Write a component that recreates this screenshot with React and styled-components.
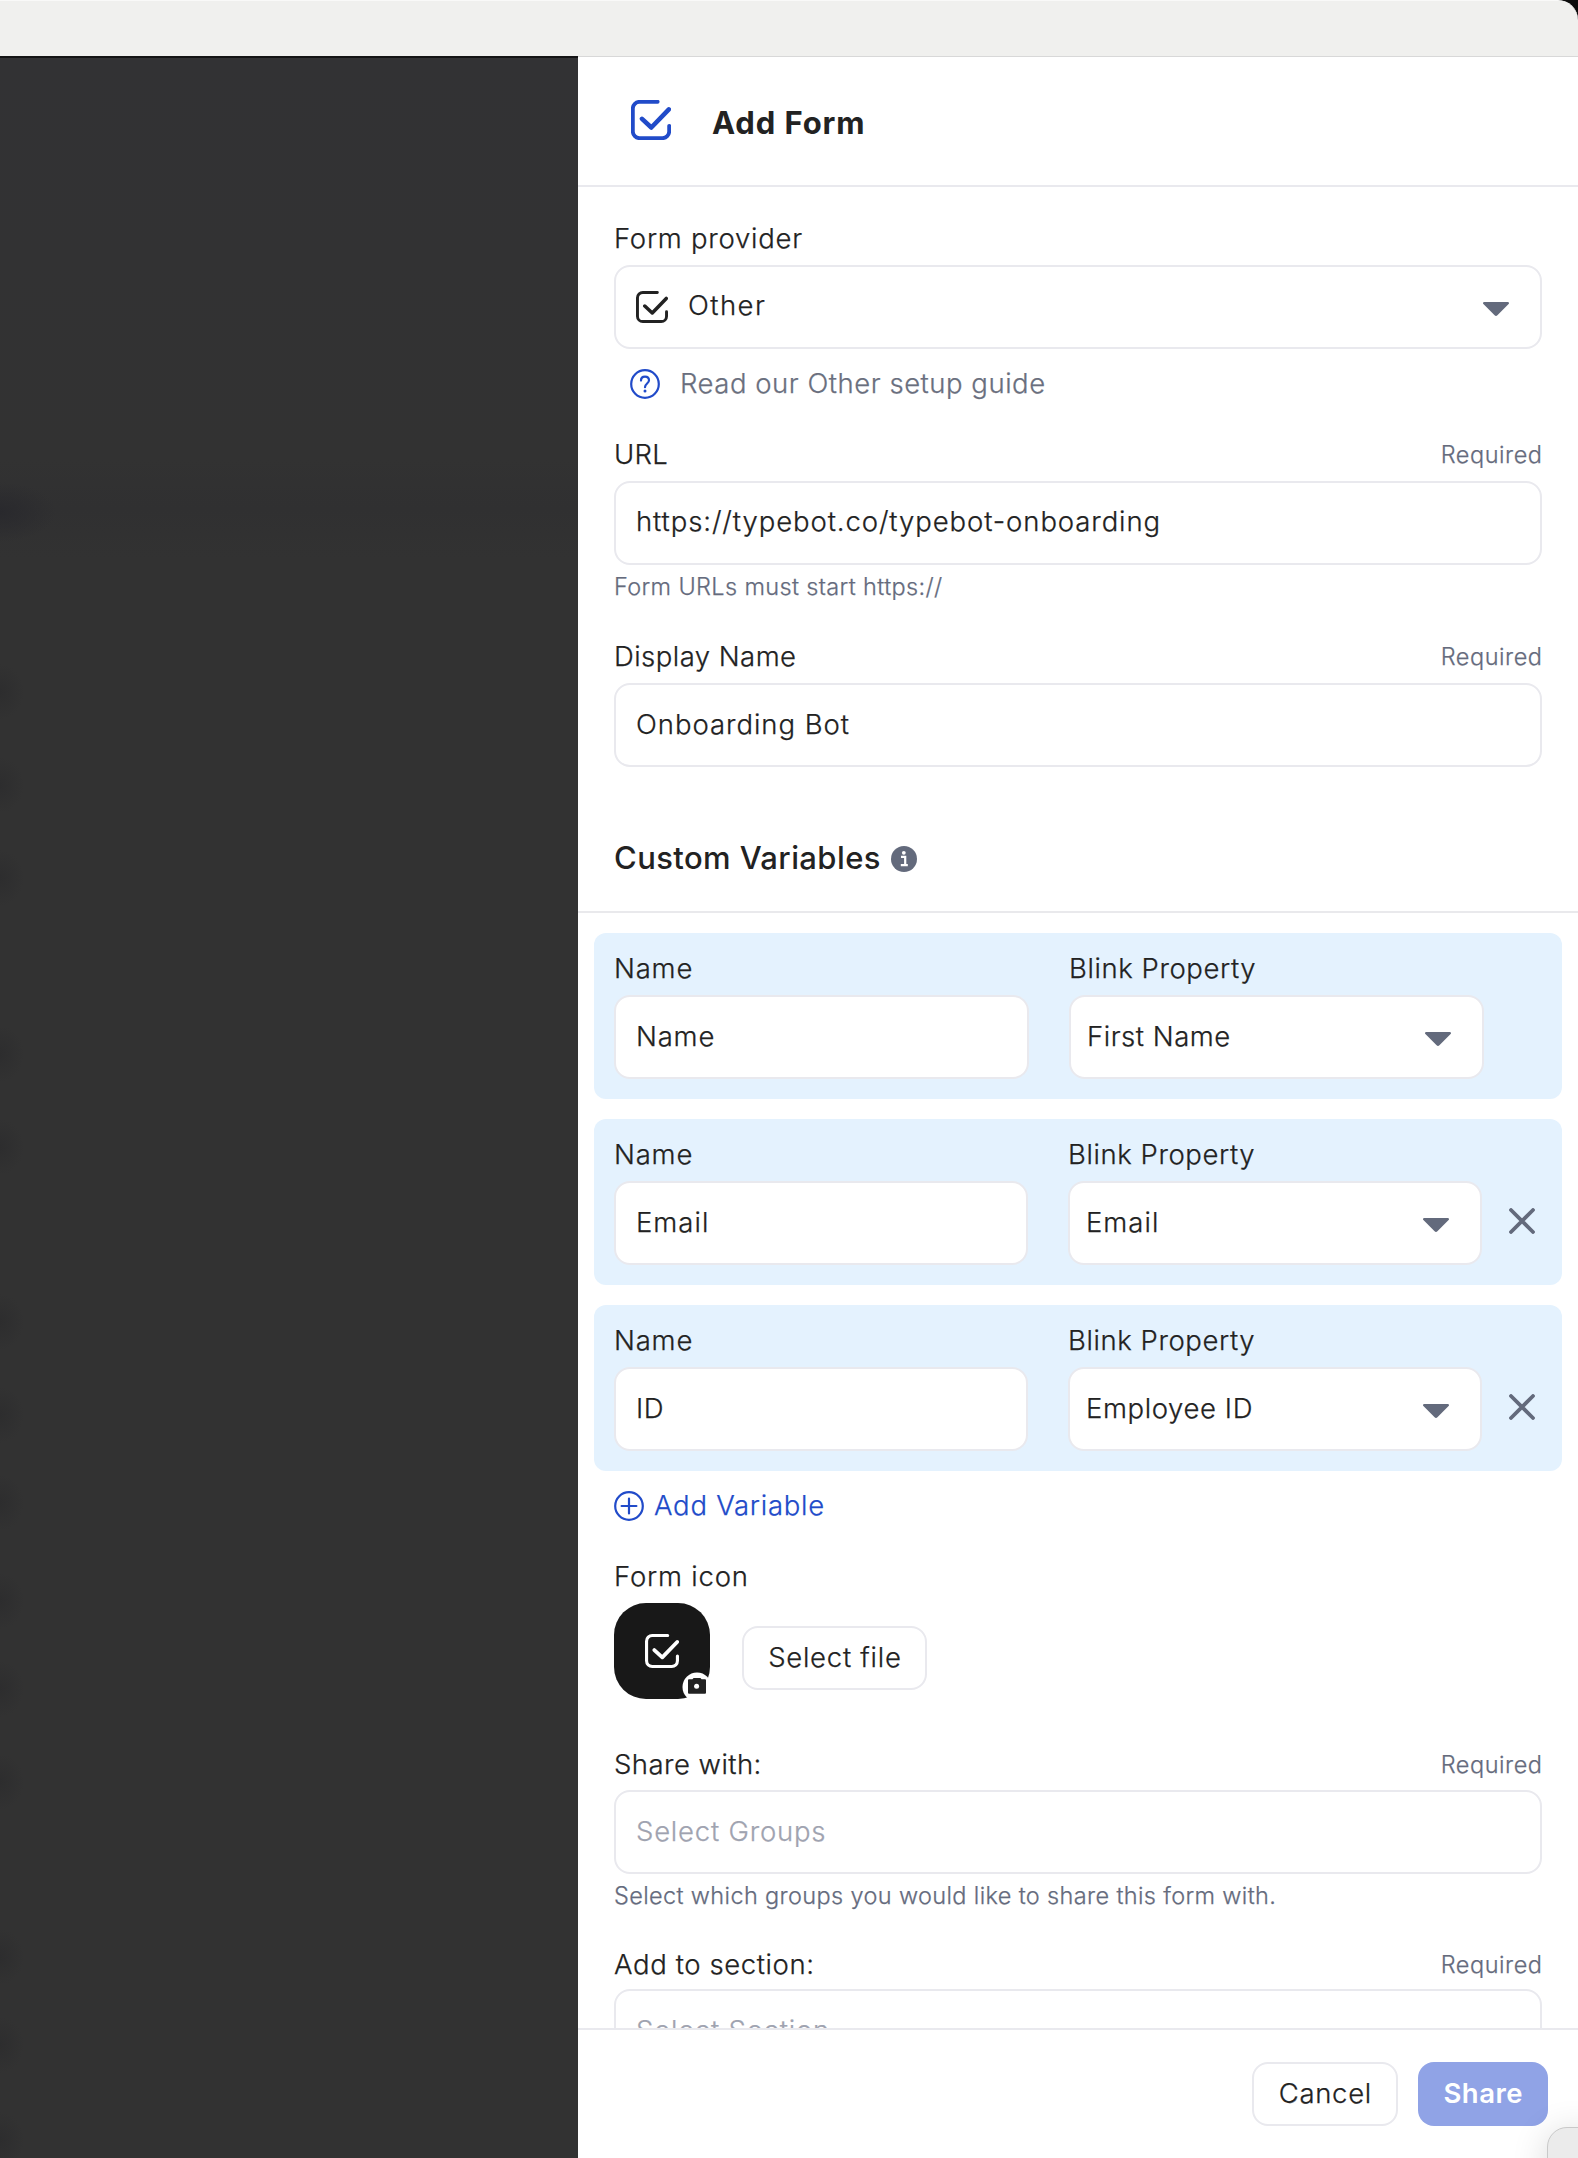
import React from "react";
import styled, { createGlobalStyle } from "styled-components";

const Global = createGlobalStyle`
  * { box-sizing: border-box; }
  html, body { margin: 0; background: #0b0b0b; }
  body {
    font-family: Inter, "Liberation Sans", sans-serif;
    color: #222;
    -webkit-font-smoothing: antialiased;
  }
`;

const Page = styled.div`
  position: relative;
  display: flex;
  flex-direction: column;
  width: 1578px;
  height: 2158px;
  overflow: hidden;
`;

const TitleBar = styled.div`
  flex: none;
  height: 56px;
  background: #f0f0ee;
  border-top: 1px solid #f9f9f8;
  border-top-right-radius: 20px;
`;

const Body = styled.div`
  flex: 1;
  min-height: 0;
  display: flex;
`;

/* Soft remains of the page's list, blurred behind the overlay. */
const smudges = [692, 785, 878, 1054, 1147, 1322, 1415, 1503, 1601, 1689, 1782, 1957, 2045, 2140]
  .map((y) => `radial-gradient(ellipse 24px 28px at 0 ${y - 58}px, #2d2d2e, transparent)`)
  .join(", ");

const Backdrop = styled.div`
  width: 578px;
  flex: none;
  background:
    radial-gradient(ellipse 56px 30px at 0 454px, #29292d, transparent),
    ${smudges},
    linear-gradient(#323234 0, #323232 400px, #303031 450px, #323232 500px);
  border-top: 2px solid #141415;
`;

const Panel = styled.div`
  flex: 1;
  min-width: 0;
  display: flex;
  flex-direction: column;
  background: #fff;
  border-top: 1px solid #d8d8d8;
`;

const Header = styled.header`
  flex: none;
  height: 130px;
  display: flex;
  align-items: center;
  padding: 0 0 2px 53px;
  gap: 41px;
  border-bottom: 2px solid #e9e9ee;
`;

const Content = styled.div`
  flex: 1;
  min-height: 0;
  overflow: hidden;
`;

const Text = styled.span`
  white-space: nowrap;
  font-size: ${(p) => p.$size || 27.5}px;
  line-height: 36px;
  font-weight: ${(p) => p.$weight || 350};
  -webkit-text-stroke: ${(p) => (p.$weight ? 0 : 0.25)}px currentColor;
  letter-spacing: ${(p) => p.$track ?? 0.8}px;
  margin-top: ${(p) => (p.$size ? 0 : -2)}px;
  margin-right: ${(p) => -(p.$track ?? 0.8)}px;
  color: ${(p) => p.$color || "#222"};
`;

const Title = styled(Text)`
  padding-top: 5px;
`;

const Field = styled.div`
  padding: 0 36px;
  margin-top: ${(p) => p.$top}px;
`;

const LabelRow = styled.div`
  height: 36px;
  display: flex;
  justify-content: space-between;
  align-items: center;
  padding-top: 2px;
  margin-bottom: ${(p) => p.$gap ?? 9}px;
`;

const CardLabel = styled.div`
  height: 34px;
  margin-bottom: 9px;
  display: flex;
  align-items: center;
`;

const Box = styled.div`
  height: 84px;
  display: flex;
  align-items: center;
  padding: 0 31px ${(p) => p.$lift ?? 1}px ${(p) => p.$pad || 20}px;
  background: #fff;
  border: 2px solid #e9e9ee;
  border-radius: 16px;
`;

const Spacer = styled.span`
  flex: 1;
`;

const CaretIcon = styled.svg`
  flex: none;
  display: block;
  margin-top: ${(p) => p.$drop}px;
`;

const LeadIcon = styled.span`
  display: flex;
  margin: 3px 20px 0 0;
`;

const Guide = styled.div`
  display: flex;
  align-items: center;
  gap: 20px;
  height: 36px;
  margin-top: 17px;
  padding-left: 16px;
`;

const Hint = styled.div`
  height: 36px;
  margin-top: 4px;
  display: flex;
  align-items: center;
`;

const SectionTitle = styled.div`
  display: flex;
  align-items: center;
  gap: 11px;
  height: 72px;
  margin-top: 55px;
  padding: 0 36px;
`;

const InfoIcon = styled.svg`
  margin-top: 2px;
`;

const VariablesWrap = styled.div`
  margin-top: 17px;
  padding: 20px 16px 0;
  border-top: 2px solid #e9e9ec;
  display: flex;
  flex-direction: column;
  gap: 20px;
`;

const VariableCard = styled.div`
  height: 166px;
  padding: 19px 20px 0;
  display: flex;
  background: #e4f2fe;
  border-radius: 12px;
`;

const Column = styled.div`
  width: ${(p) => p.$w}px;
  margin-right: ${(p) => p.$gap || 0}px;
  flex: none;
`;

const RemoveButton = styled.span`
  display: flex;
  margin: 70px 0 0 27px;
  height: 26px;
`;

const AddVariable = styled.div`
  display: flex;
  align-items: center;
  gap: 10px;
  height: 36px;
  margin-top: 17px;
  padding-left: 36px;
`;

const IconRow = styled.div`
  display: flex;
  align-items: flex-start;
`;

const Tile = styled.div`
  position: relative;
  width: 96px;
  height: 96px;
  display: flex;
  justify-content: center;
  padding-top: 31px;
  background: #181818;
  border-radius: 32px;
`;

const CameraBadge = styled.svg`
  position: absolute;
  left: 68px;
  top: 69px;
`;

const Button = styled.div`
  width: ${(p) => p.$w}px;
  height: 64px;
  display: flex;
  align-items: center;
  justify-content: center;
  border: ${(p) => (p.$primary ? "none" : "2px solid #e9e9ee")};
  border-radius: 16px;
  background: ${(p) => (p.$primary ? "#90a3e6" : "#fff")};
  margin: ${(p) => p.$margin || 0};
`;

const Footer = styled.footer`
  flex: none;
  height: 130px;
  border-top: 2px solid #e9e9ee;
  padding: 32px 30px 0 0;
  display: flex;
  justify-content: flex-end;
  gap: 20px;
`;

const CornerWidget = styled.div`
  position: absolute;
  left: 1547px;
  top: 2127px;
  width: 60px;
  height: 60px;
  background: #ebebeb;
  border: 1px solid #c9c9c9;
  border-radius: 20px;
  box-shadow: 0 6px 36px rgba(0, 0, 0, 0.16);
`;

const CheckSvg = styled.svg`
  display: block;
  flex: none;
`;

const Check = ({ size, color, w = 2.1 }) => (
  <CheckSvg width={size} height={size} viewBox="0 0 24 24" fill="none" stroke={color} strokeWidth={w} strokeLinecap="round" strokeLinejoin="round">
    <path d="M16 1.1H5.1a4 4 0 0 0-4 4v13.8a4 4 0 0 0 4 4h13.8a4 4 0 0 0 4-4v-3.4" />
    <path d="M6.600 11.3l5.6 5.2L22.7 5.6" strokeWidth={w * 1.2} />
  </CheckSvg>
);

const Caret = ({ drop = 5 }) => (
  <CaretIcon $drop={drop} width="26" height="14" viewBox="0 0 26 14">
    <path d="M1.2 0h23.6c1.2 0 1.6 1.2.8 2L14.4 13.2c-.8.9-2 .9-2.8 0L.4 2C-.4 1.2 0 0 1.2 0z" fill="#636a7c" />
  </CaretIcon>
);

const Required = () => (
  <Text $size={23.5} $color="#656b7d" $track={0.55}>Required</Text>
);

const Variable = ({ name, property, nameTrack, propTrack, removable }) => {
  const w = removable ? 414 : 415;
  return (
    <VariableCard>
      <Column $w={w} $gap={40}>
        <CardLabel><Text $track={0.8}>Name</Text></CardLabel>
        <Box><Text $track={nameTrack}>{name}</Text></Box>
      </Column>
      <Column $w={w}>
        <CardLabel><Text $track={0.58}>Blink Property</Text></CardLabel>
        <Box $pad={16}>
          <Text $track={propTrack}>{property}</Text>
          <Spacer />
          <Caret />
        </Box>
      </Column>
      {removable && (
        <RemoveButton>
          <svg width="26" height="26" viewBox="0 0 26 26" stroke="#636a7c" strokeWidth="3.8" strokeLinecap="round">
            <path d="M2 2l22 22M24 2L2 24" />
          </svg>
        </RemoveButton>
      )}
    </VariableCard>
  );
};

export default function App() {
  return (
    <Page>
      <Global />
      <TitleBar />
      <Body>
        <Backdrop />
        <Panel>
          <Header>
            <Check size={40} color="#214bc9" w={2.3} />
            <Title $size={31} $weight={650} $track={0.9}>Add Form</Title>
          </Header>
          <Content>
            <Field $top={33}>
              <LabelRow><Text $track={0.75}>Form provider</Text></LabelRow>
              <Box $lift={3}>
                <LeadIcon><Check size={32} color="#222" w={2.2} /></LeadIcon>
                <Text $track={1.45}>Other</Text>
                <Spacer />
                <Caret drop={7} />
              </Box>
              <Guide>
                <svg width="30" height="30" viewBox="0 0 30 30" fill="none" stroke="#214bc9" strokeWidth="2.2" strokeLinecap="round">
                  <circle cx="15" cy="15" r="13.8" />
                  <path d="M11 11.6c0-2.4 1.7-4 4-4s4 1.5 4 3.6c0 3.2-4 3.4-4 7" />
                  <circle cx="15" cy="22" r="1.5" fill="#214bc9" stroke="none" />
                </svg>
                <Text $color="#6a6f7e" $track={0.52}>Read our Other setup guide</Text>
              </Guide>
            </Field>
            <Field $top={34}>
              <LabelRow><Text $track={0.3}>URL</Text><Required /></LabelRow>
              <Box $lift={3}><Text $track={0.9}>https://typebot.co/typebot-onboarding</Text></Box>
              <Hint><Text $size={23.5} $color="#656b7d" $track={0.36}>Form URLs must start https://</Text></Hint>
            </Field>
            <Field $top={33}>
              <LabelRow><Text $track={0.46}>Display Name</Text><Required /></LabelRow>
              <Box><Text $track={0.96}>Onboarding Bot</Text></Box>
            </Field>
            <SectionTitle>
              <Text $size={31} $weight={520} $track={0.4}>Custom Variables</Text>
              <InfoIcon width="26" height="26" viewBox="0 0 26 26">
                <circle cx="13" cy="13" r="13" fill="#636a7c" />
                <circle cx="12.8" cy="6.8" r="1.9" fill="#fff" />
                <path d="M10 10.8h4.2v8M9.8 19.2h7" stroke="#fff" strokeWidth="2.2" fill="none" />
              </InfoIcon>
            </SectionTitle>
            <VariablesWrap>
              <Variable name="Name" property="First Name" nameTrack={0.8} propTrack={0.52} />
              <Variable name="Email" property="Email" nameTrack={1} propTrack={1} removable />
              <Variable name="ID" property="Employee ID" nameTrack={0.6} propTrack={0.6} removable />
            </VariablesWrap>
            <AddVariable>
              <svg width="30" height="30" viewBox="0 0 30 30" fill="none" stroke="#214bc9" strokeWidth="2.2" strokeLinecap="round">
                <circle cx="15" cy="15" r="13.8" />
                <path d="M15 7.6v14.8M7.6 15h14.8" />
              </svg>
              <Text $color="#214bc9" $track={0.73}>Add Variable</Text>
            </AddVariable>
            <Field $top={34}>
              <LabelRow><Text $track={0.8}>Form icon</Text></LabelRow>
              <IconRow>
                <Tile>
                  <Check size={34} color="#fff" w={2.2} />
                  <CameraBadge width="30" height="30" viewBox="0 0 30 30">
                    <circle cx="15" cy="15" r="14.5" fill="#fff" />
                    <path d="M7 7.2h3.4L11.6 6h6.8l1.2 1.2H23a1 1 0 0 1 1 1v12.600a1 1 0 0 1-1 1H7a1 1 0 0 1-1-1V8.200a1 1 0 0 1 1-1z" fill="#222" />
                    <circle cx="14.6" cy="14.2" r="2.5" fill="#fff" />
                  </CameraBadge>
                </Tile>
                <Button $w={185} $margin="23px 0 0 32px"><Text $track={0.75}>Select file</Text></Button>
              </IconRow>
            </Field>
            <Field $top={47}>
              <LabelRow $gap={8}><Text $track={0.46}>Share with:</Text><Required /></LabelRow>
              <Box><Text $color="#9fa3b0" $track={0.78}>Select Groups</Text></Box>
              <Hint><Text $size={23.5} $color="#656b7d" $track={0.36}>Select which groups you would like to share this form with.</Text></Hint>
            </Field>
            <Field $top={32}>
              <LabelRow $gap={7}><Text $track={0.6}>Add to section:</Text><Required /></LabelRow>
              <Box><Text $color="#9fa3b0" $track={0.8}>Select Section</Text></Box>
            </Field>
          </Content>
          <Footer>
            <Button $w={146}><Text $track={0.65}>Cancel</Text></Button>
            <Button $w={130} $primary><Text $color="#fff" $weight={560} $track={0.5}>Share</Text></Button>
          </Footer>
        </Panel>
      </Body>
      <CornerWidget />
    </Page>
  );
}
